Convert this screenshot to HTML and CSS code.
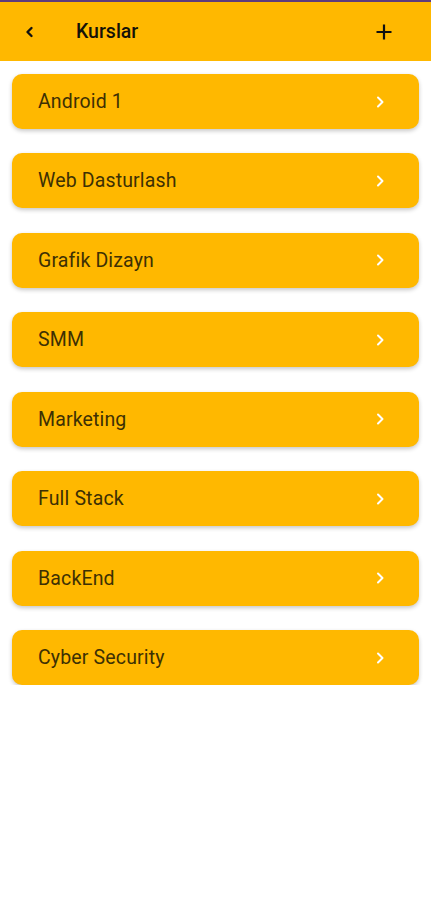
FILE: index.html
```html
<!DOCTYPE html>
<html>
<head>
<meta charset="utf-8">
<link rel="stylesheet" href="styles.css">
</head>
<body>
<div class="status"></div>
<header class="bar">
  <svg class="back" width="12" height="14" viewBox="0 0 12 14"><path d="M7.5 3 L3.5 7 L7.5 11" fill="none" stroke="#111" stroke-width="2.4" stroke-linecap="round" stroke-linejoin="round"/></svg>
  <div class="title">Kurslar</div>
  <svg class="plus" width="18" height="18" viewBox="0 0 18 18"><path d="M9 1.5 V16.5 M1.5 9 H16.5" fill="none" stroke="#111" stroke-width="2.2"/></svg>
</header>
<main class="list">
  <div class="card"><span>Android 1</span><svg class="chev" width="10" height="14" viewBox="0 0 10 14"><path d="M3 2.5 L7.5 7 L3 11.5" fill="none" stroke="#fff" stroke-width="2" stroke-linecap="round" stroke-linejoin="round"/></svg></div>
  <div class="card"><span>Web Dasturlash</span><svg class="chev" width="10" height="14" viewBox="0 0 10 14"><path d="M3 2.5 L7.5 7 L3 11.5" fill="none" stroke="#fff" stroke-width="2" stroke-linecap="round" stroke-linejoin="round"/></svg></div>
  <div class="card"><span>Grafik Dizayn</span><svg class="chev" width="10" height="14" viewBox="0 0 10 14"><path d="M3 2.5 L7.5 7 L3 11.5" fill="none" stroke="#fff" stroke-width="2" stroke-linecap="round" stroke-linejoin="round"/></svg></div>
  <div class="card"><span>SMM</span><svg class="chev" width="10" height="14" viewBox="0 0 10 14"><path d="M3 2.5 L7.5 7 L3 11.5" fill="none" stroke="#fff" stroke-width="2" stroke-linecap="round" stroke-linejoin="round"/></svg></div>
  <div class="card"><span>Marketing</span><svg class="chev" width="10" height="14" viewBox="0 0 10 14"><path d="M3 2.5 L7.5 7 L3 11.5" fill="none" stroke="#fff" stroke-width="2" stroke-linecap="round" stroke-linejoin="round"/></svg></div>
  <div class="card"><span>Full Stack</span><svg class="chev" width="10" height="14" viewBox="0 0 10 14"><path d="M3 2.5 L7.5 7 L3 11.5" fill="none" stroke="#fff" stroke-width="2" stroke-linecap="round" stroke-linejoin="round"/></svg></div>
  <div class="card"><span>BackEnd</span><svg class="chev" width="10" height="14" viewBox="0 0 10 14"><path d="M3 2.5 L7.5 7 L3 11.5" fill="none" stroke="#fff" stroke-width="2" stroke-linecap="round" stroke-linejoin="round"/></svg></div>
  <div class="card"><span>Cyber Security</span><svg class="chev" width="10" height="14" viewBox="0 0 10 14"><path d="M3 2.5 L7.5 7 L3 11.5" fill="none" stroke="#fff" stroke-width="2" stroke-linecap="round" stroke-linejoin="round"/></svg></div>
</main>
</body>
</html>
```
FILE: styles.css
```css
html, body {
  margin: 0;
  padding: 0;
  background: #fff;
  font-family: Roboto, "Noto Sans", sans-serif;
}
.status {
  height: 2px;
  background: #5e3b7d;
}
.bar {
  height: 59px;
  background: #ffb800;
  display: flex;
  align-items: center;
  padding: 0 0 0 24px;
}
.back {
  flex: none;
  margin-top: 1px;
}
.title {
  margin-left: 40px;
  font-size: 19.5px;
  font-weight: 500;
  color: #141208;
  flex: 1;
}
.plus {
  flex: none;
  margin-right: 38px;
}
.list {
  display: flex;
  flex-direction: column;
  gap: 24.45px;
  padding: 13px 12px 0 12px;
}
.card {
  height: 55px;
  background: #ffb800;
  border-radius: 10px;
  box-shadow: 0 2px 4px rgba(0,0,0,0.22);
  display: flex;
  align-items: center;
  justify-content: space-between;
  padding: 0 34px 0 26px;
  font-size: 19.5px;
  letter-spacing: 0.15px;
  color: #3d3004;
}
.chev {
  flex: none;
}
```
